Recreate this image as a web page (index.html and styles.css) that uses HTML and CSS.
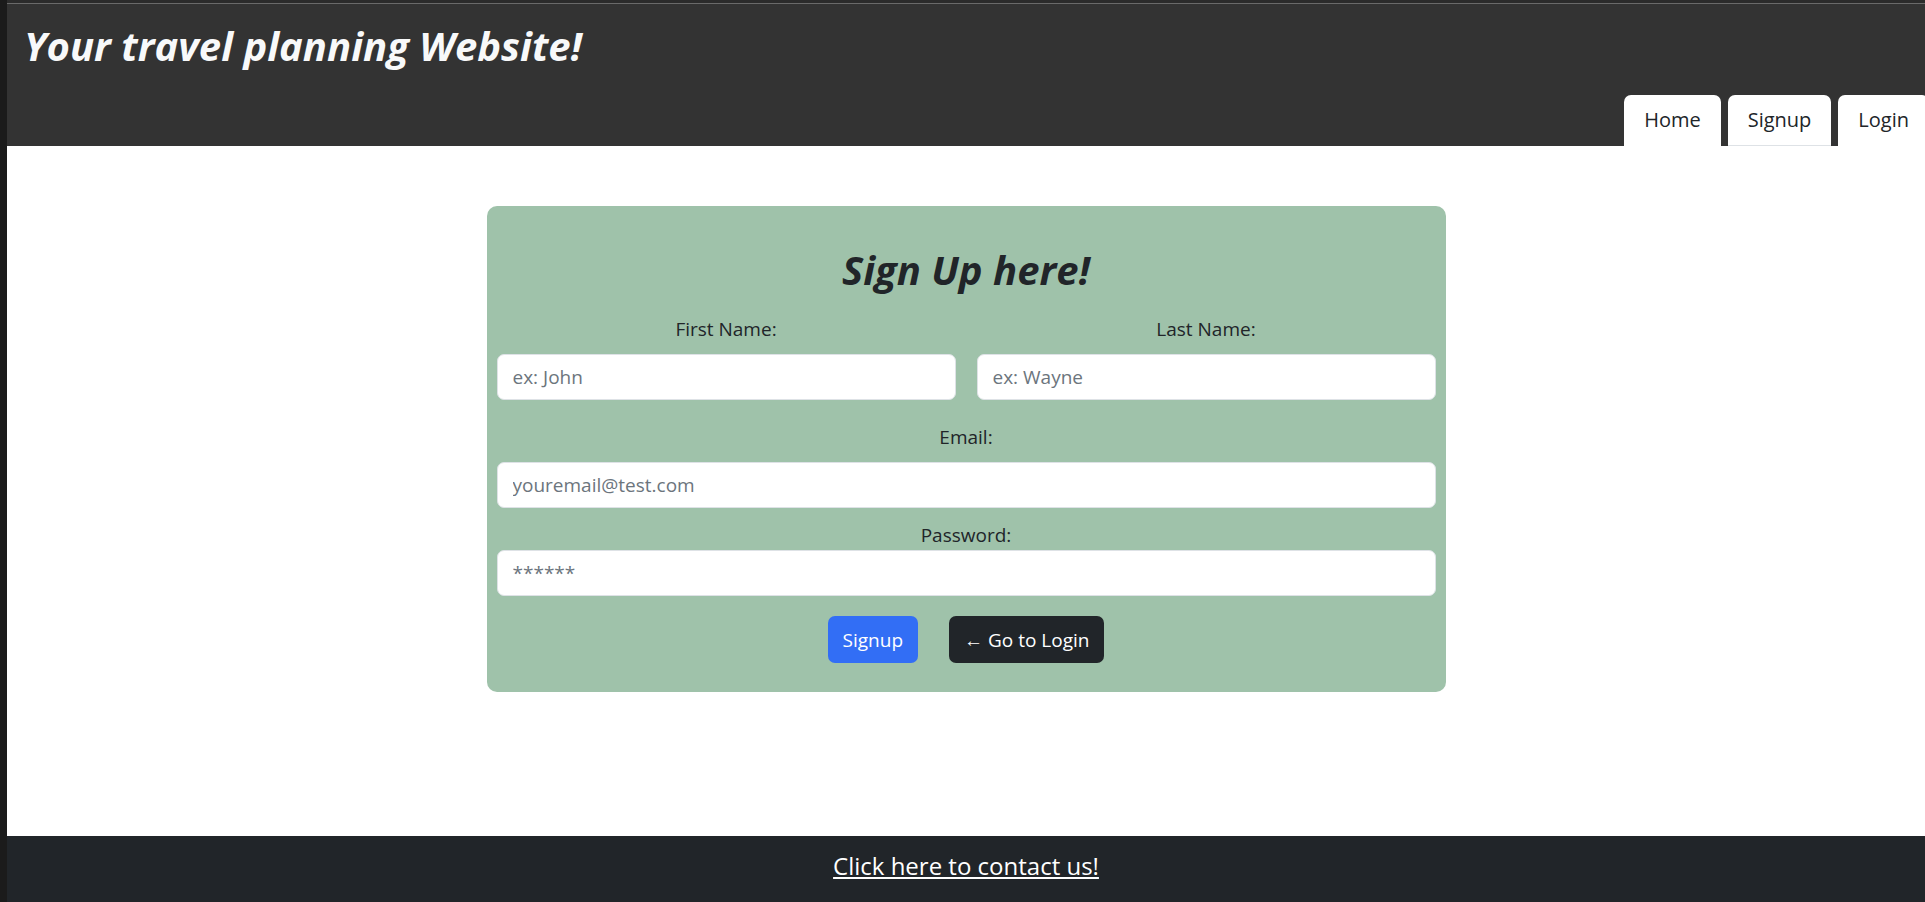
FILE: index.html
```html
<!DOCTYPE html>
<html lang="en">
<head>
<meta charset="utf-8">
<title>Sign Up</title>
<link rel="stylesheet" href="styles.css">
</head>
<body>
<div class="strip"></div>
<div class="page">
  <div class="chrome-line"></div>
  <header class="site-header">
    <h1 class="site-title">Your travel planning Website!</h1>
    <nav class="tabs">
      <a class="tab" href="#">Home</a>
      <a class="tab tab-active" href="#">Signup</a>
      <a class="tab" href="#">Login</a>
    </nav>
  </header>
  <main class="main">
    <form class="card">
      <h2 class="card-title">Sign Up here!</h2>
      <div class="row">
        <div class="field">
          <label class="label" for="fn">First Name:</label>
          <input class="input" id="fn" type="text" placeholder="ex: John">
        </div>
        <div class="field">
          <label class="label" for="ln">Last Name:</label>
          <input class="input" id="ln" type="text" placeholder="ex: Wayne">
        </div>
      </div>
      <div class="field field-email">
        <label class="label" for="em">Email:</label>
        <input class="input" id="em" type="email" placeholder="youremail@test.com">
      </div>
      <div class="field field-pass">
        <label class="label label-tight" for="pw">Password:</label>
        <input class="input" id="pw" type="password" placeholder="******">
      </div>
      <div class="actions">
        <button class="btn btn-primary" type="button">Signup</button>
        <button class="btn btn-dark" type="button">← Go to Login</button>
      </div>
    </form>
  </main>
  <footer class="footer">
    <a class="footer-link" href="#">Click here to contact us!</a>
  </footer>
</div>
</body>
</html>
```
FILE: styles.css
```css
* { box-sizing: border-box; }
html, body { margin: 0; padding: 0; }
body {
  display: flex;
  min-height: 902px;
  overflow: hidden;
  font-family: "Open Sans", "Noto Sans", sans-serif;
  color: #212529;
  background: #1b1b1b;
}
.strip {
  width: 7px;
  flex: 0 0 7px;
  background: #1b1b1b;
}
.page {
  flex: 1;
  display: flex;
  flex-direction: column;
  min-height: 902px;
  background: #fff;
}
.chrome-line {
  height: 4px;
  background: #2b2b2b;
  border-bottom: 1px solid #6a6a6a;
}
.site-header {
  background: #333333;
  height: 142px;
  display: flex;
  flex-direction: column;
  justify-content: space-between;
}
.site-title {
  margin: 12px 0 0 17px;
  font-size: 40px;
  line-height: 60px;
  font-weight: 700;
  font-style: italic;
  color: #f8f9fa;
}
.tabs {
  display: flex;
  justify-content: flex-end;
  gap: 7px;
  margin-right: -4px;
}
.tab {
  display: block;
  background: #fff;
  color: #212529;
  text-decoration: none;
  font-size: 20px;
  line-height: 30px;
  padding: 10px 20px 11px;
  border-radius: 7px 7px 0 0;
}
.tab-active {
  border-bottom: 1px solid #dee2e6;
  padding-bottom: 10px;
}
.main {
  flex: 1;
  padding-top: 60px;
}
.card {
  width: 50%;
  margin: 0 auto;
  background: #9fc2aa;
  border-radius: 10px;
  padding: 40px 10px 29px;
}
.card-title {
  margin: 0 0 20px;
  text-align: center;
  font-size: 40px;
  line-height: 48px;
  font-weight: 700;
  font-style: italic;
}
.row {
  display: flex;
  gap: 21px;
}
.row .field { flex: 1; }
.field {
  display: flex;
  flex-direction: column;
}
.field-email { margin-top: 22px; }
.field-pass { margin-top: 12px; }
.label {
  text-align: center;
  font-size: 19px;
  line-height: 30px;
  margin-bottom: 10px;
}
.label-tight { margin-bottom: 0; }
.input {
  height: 46px;
  border: 1px solid #dee2e6;
  border-radius: 7px;
  background: #fff;
  padding: 0 15px;
  font-family: inherit;
  font-size: 19px;
  color: #212529;
}
.input::placeholder { color: #6c757d; }
.actions {
  display: flex;
  justify-content: center;
  gap: 31px;
  margin-top: 20px;
}
.btn {
  height: 47px;
  border: 0;
  border-radius: 7px;
  padding: 0 15px;
  font-family: inherit;
  font-size: 19px;
  color: #fff;
}
.btn-primary { background: #326ef5; }
.btn-dark { background: #212529; }
.footer {
  background: #212529;
  height: 66px;
  padding-bottom: 6px;
  display: flex;
  align-items: center;
  justify-content: center;
}
.footer-link {
  color: #fff;
  font-size: 24px;
  line-height: 36px;
}
```
